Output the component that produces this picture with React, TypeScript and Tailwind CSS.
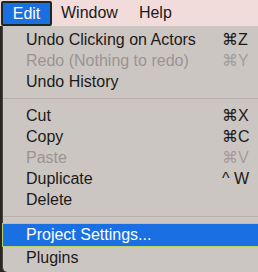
import React from "react";

type Item = { label: string; key?: string; disabled?: boolean; active?: boolean } | "sep";

const items: Item[] = [
  { label: "Undo Clicking on Actors", key: "⌘Z" },
  { label: "Redo (Nothing to redo)", key: "⌘Y", disabled: true },
  { label: "Undo History" },
  "sep",
  { label: "Cut", key: "⌘X" },
  { label: "Copy", key: "⌘C" },
  { label: "Paste", key: "⌘V", disabled: true },
  { label: "Duplicate", key: "^ W" },
  { label: "Delete" },
  "sep",
  { label: "Project Settings...", active: true },
  { label: "Plugins" },
];

export default function App() {
  return (
    <div
      className="w-[258px] h-[272px] overflow-hidden bg-[#2a2624] flex flex-col text-[16px] text-[#1b1a19]"
      style={{ fontFamily: '"Liberation Sans", Arial, sans-serif' }}
    >
      {/* Menu bar */}
      <div className="h-[26px] shrink-0 bg-[#f2dcdb] flex items-center text-[16px]">
        <div className="ml-[1px] h-[25px] w-[51px] flex items-center justify-center bg-[#1a6fe3] text-white border-2 border-[#1c2a1e] rounded-[2px] mt-[1px]">
          Edit
        </div>
        <span className="ml-[9px]">Window</span>
        <span className="ml-[21px]">Help</span>
      </div>

      {/* Dropdown */}
      <div className="flex-1 ml-[2px] w-[280px] bg-[#ccc6c3] border-l border-[#4a4644] rounded-bl-[5px] pt-[3px]">
        {items.map((it, i) =>
          it === "sep" ? (
            <div key={i} className="h-[13px] flex items-center">
              <div className="w-full h-px bg-[#b7b0ad]" />
            </div>
          ) : (
            <div
              key={i}
              className={
                it.active
                  ? "h-[24px] flex items-center bg-[#1a6fe3] text-white border border-[#b9cf6a] -ml-px"
                  : "h-[21px] flex items-center"
              }
            >
              <span
                className={
                  "w-[219px] pl-[23px] shrink-0 " + (it.disabled ? "text-[#9a9491]" : "")
                }
              >
                {it.label}
              </span>
              {it.key && (
                <span className={it.disabled ? "text-[#a39d9a]" : ""}>{it.key}</span>
              )}
            </div>
          )
        )}
      </div>
    </div>
  );
}
